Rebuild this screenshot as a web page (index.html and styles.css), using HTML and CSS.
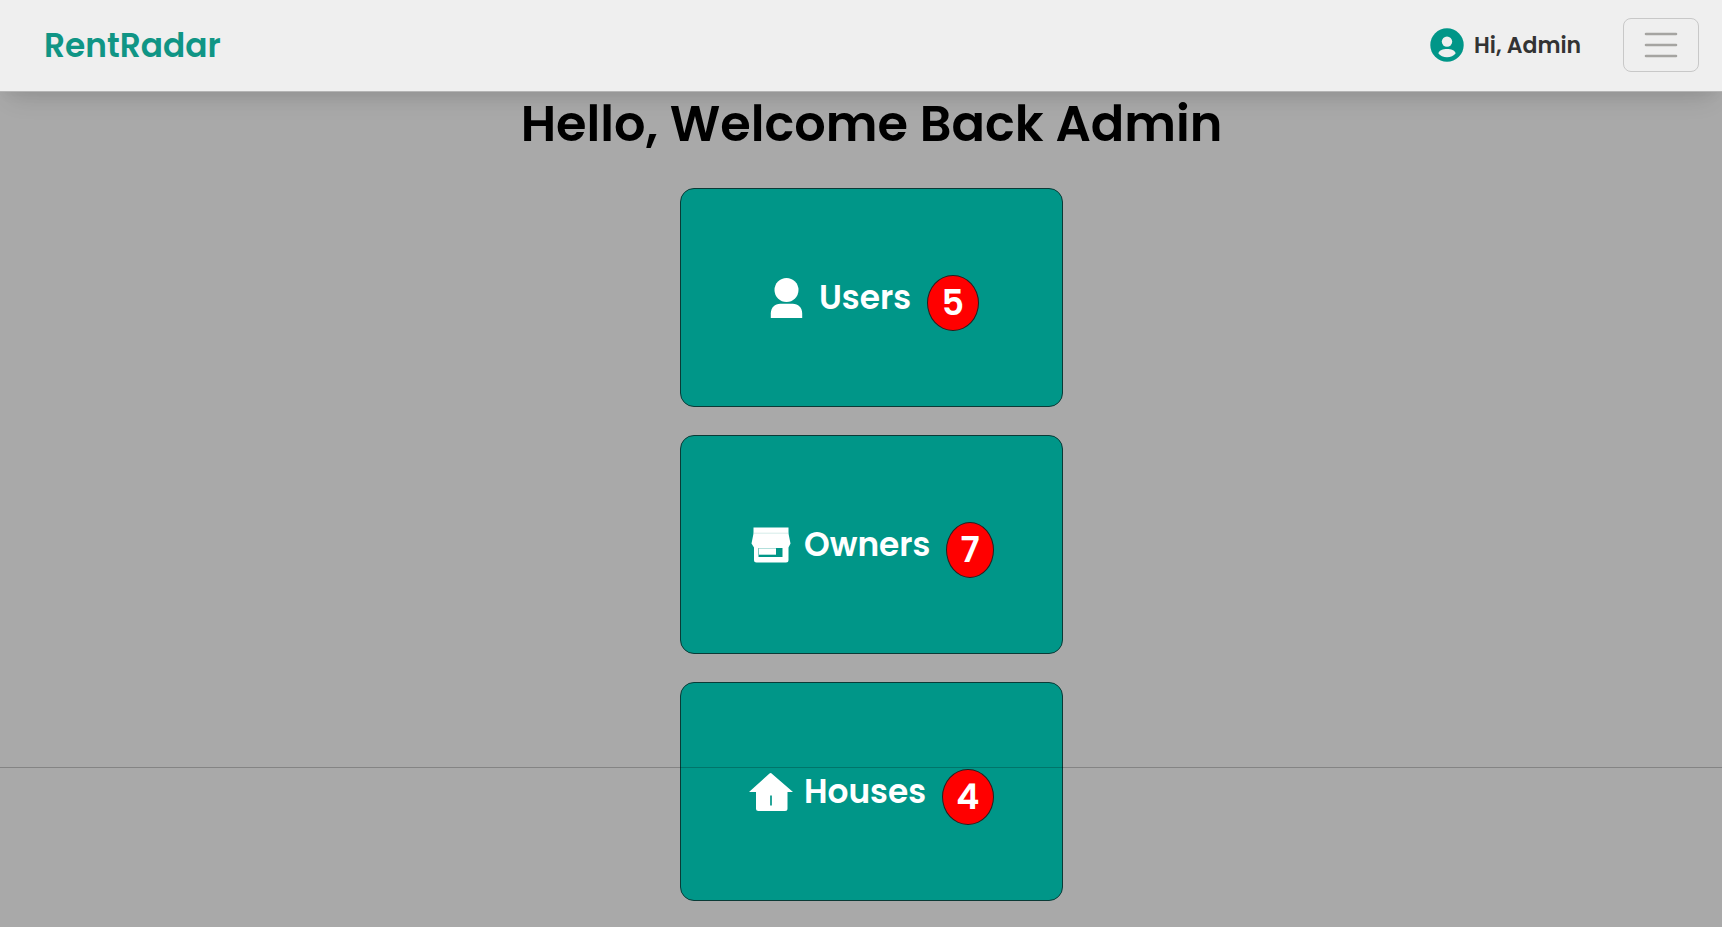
FILE: index.html
```html
<!DOCTYPE html>
<html lang="en">
<head>
<meta charset="utf-8">
<title>RentRadar</title>
<link rel="stylesheet" href="styles.css">
</head>
<body>
<header class="navbar">
  <a class="brand">RentRadar</a>
  <div class="account">
    <svg class="avatar" viewBox="0 0 34 34"><circle cx="17" cy="17" r="16.7" fill="#009688"/><circle cx="17" cy="13.6" r="5.2" fill="#efefef"/><path d="M8.3 25.2c1.1-3.2 4.5-4.3 8.7-4.3s7.600 1.100 8.700 4.300c-2 2.700-5 4-8.700 4s-6.700-1.300-8.700-4z" fill="#efefef"/></svg>
    <span class="greeting">Hi, Admin</span>
  </div>
  <button class="menu" aria-label="Menu">
    <svg viewBox="0 0 34 26" width="34" height="26"><path d="M2 2h30M2 13h30M2 24h30" stroke="#a5a4a1" stroke-width="2.600" stroke-linecap="round"/></svg>
  </button>
</header>
<main class="dashboard">
  <h1 class="title">Hello, Welcome Back Admin</h1>
  <section class="card users">
    <svg class="icon" viewBox="0 0 44 44"><circle cx="22.500" cy="14" r="12" fill="#fff"/><path d="M6.800 42v-4.500c0-6 4-9.800 9.500-9.800h12.400c5.500 0 9.500 3.800 9.500 9.800V42z" fill="#fff"/></svg>
    <span class="label">Users</span><span class="badge">5</span>
  </section>
  <section class="card owners">
    <svg class="icon" viewBox="0 0 44 44"><path d="M4.500 4.500h35v6l2 10-2 4V37q0 2.500-2.500 2.500H7.500Q5 39.500 5 37V24.500l-2.500-4 2-10z" fill="#fff"/><path d="M4.500 10.200h35" stroke="#b9e0dc" stroke-width=".6"/><path d="M9.500 25h24v9h-24z" fill="#009688"/><path d="M10 25.300h17v6.400H10z" fill="#fff"/></svg>
    <span class="label">Owners</span><span class="badge">7</span>
  </section>
  <section class="card houses">
    <svg class="icon" viewBox="0 0 44 44"><path d="M22 3 44 22h-5.500V38.500q0 2.500-2.500 2.500H9.500Q7 41 7 38.500V22H0L20.500 3.500q.8-.8 1.500-.5z" fill="#fff"/><path d="M22 25.500v10" stroke="#009688" stroke-width="1.700"/></svg>
    <span class="label">Houses</span><span class="badge">4</span>
  </section>
</main>
<div class="rule"></div>
</body>
</html>
```
FILE: styles.css
```css
* { box-sizing: border-box; }
body {
  margin: 0;
  height: 927px;
  overflow: hidden;
  position: relative;
  background: #a9a9a9;
  font-family: Poppins, Inter, sans-serif;
}
.navbar {
  position: relative;
  height: 92px;
  padding: 0 23px 1px 44px;
  display: flex;
  align-items: center;
  background: #efefef;
  border-bottom: 1px solid #b4b4b4;
  box-shadow: 0 16px 24px -10px rgba(0, 0, 0, .12), 0 5px 12px -3px rgba(0, 0, 0, .05);
}
.brand {
  width: 200px;
  padding-top: 1px;
  color: #109585;
  font-size: 32.8px;
  font-weight: 600;
}
.account {
  margin-left: auto;
  display: flex;
  align-items: center;
  gap: 10px;
}
.avatar { width: 34px; height: 34px; }
.greeting {
  width: 149px;
  color: #333;
  font-size: 22px;
  font-weight: 600;
  white-space: nowrap;
}
.menu {
  width: 76px;
  height: 54px;
  padding: 0;
  display: flex;
  align-items: center;
  justify-content: center;
  background: transparent;
  border: 1px solid #c8c8c8;
  border-radius: 8px;
}
.dashboard {
  padding-left: 21px;
  display: flex;
  flex-direction: column;
  align-items: center;
  gap: 28px;
}
.title {
  height: 68px;
  margin: 0;
  color: #000;
  font-size: 49.4px;
  font-weight: 600;
  line-height: 64px;
  white-space: nowrap;
}
.card {
  flex: none;
  width: 383px;
  height: 219px;
  padding-left: 68px;
  display: flex;
  align-items: center;
  background: #009688;
  border: 1px solid #0a3a36;
  border-radius: 14px;
  color: #fff;
}
.card.users { padding-left: 83px; }
.icon { flex: none; width: 44px; height: 44px; }
.label {
  flex: none;
  width: 153px;
  padding-left: 11px;
  font-size: 32.8px;
  font-weight: 600;
}
.users .label { width: 119px; }
.houses .label { width: 149px; }
.badge {
  flex: none;
  width: 48px;
  height: 56px;
  margin-top: 11px;
  border: 1px solid #222;
  border-radius: 50%;
  background: #f00;
  font-size: 35px;
  font-weight: 600;
  line-height: 54px;
  text-align: center;
}
.users .badge, .houses .badge { width: 51.500px; }
.rule {
  position: absolute;
  top: 767px;
  left: 0;
  right: 0;
  height: 1px;
  background: rgba(0, 0, 0, .22);
}
```
